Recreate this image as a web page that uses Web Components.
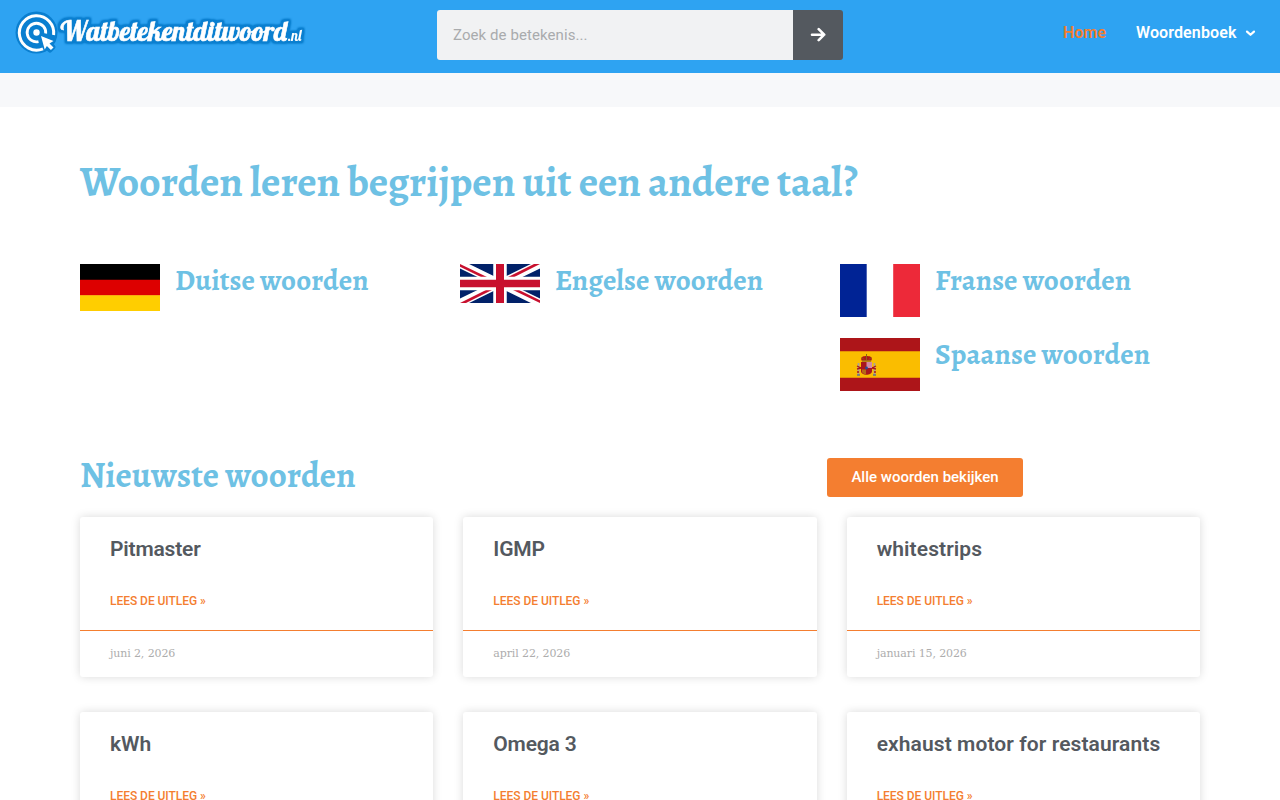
<!DOCTYPE html>
<html lang="nl">
<head>
<meta charset="utf-8">
<title>Watbetekentditwoord.nl</title>
<style>
  body {
    margin: 0;
    height: 800px;
    overflow: hidden;
    background: white;
    font-family: Roboto, "Liberation Sans", sans-serif;
  }
</style>
</head>
<body>
<word-page></word-page>

<script>
!function() {
  const define = (name, html) => {
    const template = document.createElement('template');
    template.innerHTML = html;
    window.customElements.define(name, class extends HTMLElement {
      constructor() {
        super();
        const root = this.attachShadow({mode: 'open'});
        root.appendChild(template.content.cloneNode(true));
      }
    });
  };

  define('site-logo', `
    <style>
      :host { display: block; width: 292px; height: 48px; }
      svg { display: block; }
      text {
        font-family: Lobster, "Liberation Serif", serif;
        fill: white;
      }
      .name { stroke: white; stroke-width: .6px; }
    </style>
    <svg width="292" height="48" viewBox="14 9 292 48">
      <filter id="outline" filterUnits="userSpaceOnUse" x="54" y="9" width="252" height="48" color-interpolation-filters="sRGB">
        <feMorphology in="SourceAlpha" operator="dilate" radius="2.400"/>
        <feGaussianBlur stdDeviation=".9"/>
        <feComponentTransfer result="edge"><feFuncA type="linear" slope="2"/></feComponentTransfer>
        <feFlood flood-color="#0a7fd0"/>
        <feComposite in2="edge" operator="in"/>
        <feMerge><feMergeNode/><feMergeNode in="SourceGraphic"/></feMerge>
      </filter>
      <circle cx="36.5" cy="32.500" r="21" fill="#0a7fd0"/>
      <path d="M41 36l12 5-3 3 3 3-3 3-4-4-2 3z" fill="#0a7fd0" stroke="#0a7fd0" stroke-width="5" stroke-linejoin="round"/>
      <g fill="none" stroke="white">
        <path d="M43 48.8A17.2 17.2 0 1 1 53.6 35" stroke-width="3"/>
        <path d="M38.5 41.6A9.3 9.3 0 1 1 45.7 33.5" stroke-width="2.8"/>
      </g>
      <circle cx="36.5" cy="32.5" r="3.2" fill="white"/>
      <path d="M41 36l12.5 5-4 2.4 4 4-2.6 2.6-4-4-2.2 3.6z" fill="white"/>
      <g filter="url(#outline)">
        <text class="name" x="60.500" y="41.200" font-size="28" textLength="226.500" lengthAdjust="spacingAndGlyphs">Watbetekentditwoord</text>
        <text x="287.500" y="41.200" font-size="14.500" textLength="14" lengthAdjust="spacingAndGlyphs">.nl</text>
      </g>
    </svg>
  `);

  define('search-form', `
    <style>
      :host { display: flex; width: 406px; height: 50px; border-radius: 3px; overflow: hidden; }
      .input {
        flex: 1;
        padding-left: 16px;
        background: #f1f2f3;
        color: #a9abad;
        font-size: 15px;
        line-height: 50px;
        letter-spacing: .08px;
      }
      .submit {
        display: flex;
        align-items: center;
        justify-content: center;
        width: 50px;
        background: #54595f;
      }
    </style>
    <div class="input">Zoek de betekenis...</div>
    <div class="submit">
      <svg width="16" height="16" viewBox="0 0 16 16" fill="none" stroke="white" stroke-width="2.6" stroke-linecap="round" stroke-linejoin="round">
        <path d="M2 7.7h12M8.700 2.200l5.500 5.500-5.500 5.500"/>
      </svg>
    </div>
  `);

  define('site-nav', `
    <style>
      :host { display: flex; gap: 30px; font-size: 16px; font-weight: 600; line-height: 20px; color: white; }
      .active { color: #f47e30; }
      .parent { display: flex; align-items: center; gap: 8px; letter-spacing: .12px; }
    </style>
    <div class="active">Home</div>
    <div class="parent">
      <span>Woordenboek</span>
      <svg width="11" height="8" viewBox="0 0 11 8" fill="none" stroke="white" stroke-width="2.2" stroke-linecap="round" stroke-linejoin="round"><path d="M2 2.600l3.500 3.200L9 2.600"/></svg>
    </div>
  `);

  define('site-header', `
    <style>
      :host {
        display: grid;
        grid-template-columns: 423px 406px 1fr;
        align-items: start;
        height: 73px;
        padding: 0 24.500px 0 14px;
        background: #2ea3f2;
      }
      site-logo { margin-top: 9px; }
      search-form { margin-top: 10px; }
      site-nav { margin-top: 23px; justify-content: flex-end; }
    </style>
    <site-logo></site-logo>
    <search-form></search-form>
    <site-nav></site-nav>
  `);

  define('page-title', `
    <style>
      :host {
        display: block;
        color: #6ec1e4;
        font-family: Alegreya, "Liberation Serif", serif;
        font-weight: bold;
        white-space: nowrap;
      }
    </style>
    <slot></slot>
  `);

  define('language-link', `
    <style>
      :host { display: flex; gap: 15px; align-items: flex-start; }
      ::slotted(svg) { display: block; flex: none; }
      page-title { font-size: 29px; line-height: 34px; letter-spacing: .1px; }
    </style>
    <slot name="flag"></slot>
    <page-title><slot></slot></page-title>
  `);

  define('word-card', `
    <style>
      :host {
        display: flex;
        flex-direction: column;
        height: 160px;
        border-radius: 3px;
        background: white;
        box-shadow: 0 0 10px rgba(0, 0, 0, .15);
      }
      .text { flex: 1; padding: 20px 30px 0; }
      .title {
        color: #54595f;
        font-size: 21px;
        font-weight: 600;
        line-height: 25px;
        letter-spacing: var(--title-spacing, 0);
        white-space: nowrap;
      }
      .more { margin-top: 31px; color: #f47e30; font-size: 12px; font-weight: 500; line-height: 16px; letter-spacing: -.04px; }
      .date {
        height: 46px;
        padding: 0 30px;
        border-top: 1px solid #f47e30;
        color: #adadad;
        font-family: "Roboto Slab", "DejaVu Serif", serif;
        font-size: 11px;
        line-height: 46px;
        letter-spacing: -.12px;
      }
    </style>
    <div class="text">
      <div class="title"><slot></slot></div>
      <div class="more">LEES DE UITLEG »</div>
    </div>
    <div class="date"><slot name="date"></slot></div>
  `);

  define('word-page', `
    <style>
      :host { display: block; height: 800px; overflow: hidden; }
      .band { height: 34px; background: #f7f8fa; }
      main { width: 1120px; margin: 0 auto; padding-top: 53px; }
      .lead { font-size: 42px; line-height: 44px; letter-spacing: -.065px; }
      .languages {
        display: grid;
        grid-template-columns: repeat(3, 360px);
        column-gap: 20px;
        margin-top: 60px;
      }
      .stack { display: grid; gap: 21px; }
      .latest {
        display: grid;
        grid-template-columns: 747px 1fr;
        align-items: start;
        height: 59px;
        margin-top: 67px;
      }
      .latest page-title { font-size: 35px; line-height: 34px; letter-spacing: .05px; }
      .all {
        justify-self: start;
        width: 196px;
        border-radius: 3px;
        background: #f47e30;
        color: white;
        font-size: 15px;
        font-weight: 500;
        line-height: 39px;
        text-align: center;
      }
      .cards { display: grid; grid-template-columns: repeat(3, 1fr); gap: 35px 30px; }
      .tight { --title-spacing: -.19px; }
      .wide { --title-spacing: .09px; }
    </style>
    <site-header></site-header>
    <div class="band"></div>
    <main>
      <page-title class="lead">Woorden leren begrijpen uit een andere taal?</page-title>
      <div class="languages">
        <language-link>
          <svg slot="flag" width="80" height="47"><path d="M0 0h80v16H0z"/><path d="M0 15.7h80v16H0z" fill="#d00"/><path d="M0 31.2h80V47H0z" fill="#ffce00"/></svg>
          Duitse woorden
        </language-link>
        <language-link>
          <svg slot="flag" width="80" height="39" viewBox="0 0 80 39">
            <path d="M0 0h80v39H0z" fill="#012169"/>
            <path d="M0 0l80 39M80 0L0 39" stroke="white" stroke-width="8"/>
            <g fill="#c8102e"><path d="M0 0l27 13h-6L0 2.7zM80 0h-6L48 13h6.300zM0 39h6l26-13h-6zM80 39v-2.700L59 26h-6z"/></g>
            <path d="M40 0v39M0 19.500h80" stroke="white" stroke-width="13.500"/>
            <path d="M40 0v39" stroke="#c8102e" stroke-width="8"/><path d="M0 19.500h80" stroke="#c8102e" stroke-width="7.500"/>
          </svg>
          Engelse woorden
        </language-link>
        <div class="stack">
          <language-link>
            <svg slot="flag" width="80" height="53"><path d="M0 0h26.700v53H0z" fill="#002395"/><path d="M53.200 0H80v53H53.200z" fill="#ed2939"/></svg>
            Franse woorden
          </language-link>
          <language-link>
            <svg slot="flag" width="80" height="53">
              <path d="M0 0h80v53H0z" fill="#ad1519"/>
              <path d="M0 13.200h80v26.600H0z" fill="#fabd00"/>
              <!-- coat of arms: pillars, crown, shield -->
              <path d="M18.500 25v12M34.500 25v12" stroke="#aaa294" stroke-width="1.800"/>
              <path d="M17 28l4 2M17 31l4-1M36 28l-4 2M36 31l-4-1M17 34h2M34 34h2" stroke="#ad1519" stroke-width="1.300"/>
              <path d="M17 37h3M33 37h3" stroke="#62718a" stroke-width="1.500"/>
              <path d="M21.500 22.500c-1.500-4 2.500-4.500 5-4.500s6.500.5 5 4.500z" fill="#ad1519"/>
              <path d="M26.500 16v6M22 19.500l2 2M31 19.500l-2 2" stroke="#8a6518"/>
              <path d="M22 23h9" stroke="#8d641c" stroke-width="1.200"/>
              <path d="M21 24h11v9c0 5-11 5-11 0z" fill="#a9171c"/>
              <path d="M26.500 24H32v6h-5.500z" fill="#d28aa3"/>
              <path d="M22 31.500h4v5c-2-.4-4-1-4-3z" fill="#b56a16"/>
              <circle cx="26.500" cy="30" r="1.400" fill="#234c9a"/>
            </svg>
            Spaanse woorden
          </language-link>
        </div>
      </div>
      <div class="latest">
        <page-title>Nieuwste woorden</page-title>
        <div class="all">Alle woorden bekijken</div>
      </div>
      <div class="cards">
        <word-card class="tight">Pitmaster<span slot="date">juni 2, 2026</span></word-card>
        <word-card class="tight">IGMP<span slot="date">april 22, 2026</span></word-card>
        <word-card class="wide">whitestrips<span slot="date">januari 15, 2026</span></word-card>
        <word-card>kWh</word-card>
        <word-card class="tight">Omega 3</word-card>
        <word-card class="wide">exhaust motor for restaurants</word-card>
      </div>
    </main>
  `);
}();
</script>
</body>
</html>
